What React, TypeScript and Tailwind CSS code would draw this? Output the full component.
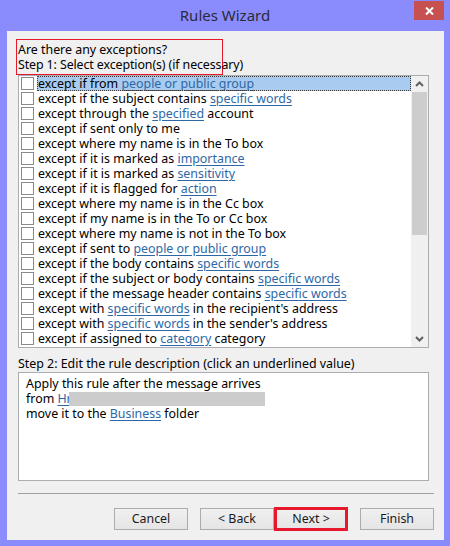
const rows: { parts: (string | { link: string })[] }[] = [
  { parts: ["except if from ", { link: "people or public group" }] },
  { parts: ["except if the subject contains ", { link: "specific words" }] },
  { parts: ["except through the ", { link: "specified" }, " account"] },
  { parts: ["except if sent only to me"] },
  { parts: ["except where my name is in the To box"] },
  { parts: ["except if it is marked as ", { link: "importance" }] },
  { parts: ["except if it is marked as ", { link: "sensitivity" }] },
  { parts: ["except if it is flagged for ", { link: "action" }] },
  { parts: ["except where my name is in the Cc box"] },
  { parts: ["except if my name is in the To or Cc box"] },
  { parts: ["except where my name is not in the To box"] },
  { parts: ["except if sent to ", { link: "people or public group" }] },
  { parts: ["except if the body contains ", { link: "specific words" }] },
  { parts: ["except if the subject or body contains ", { link: "specific words" }] },
  { parts: ["except if the message header contains ", { link: "specific words" }] },
  { parts: ["except with ", { link: "specific words" }, " in the recipient's address"] },
  { parts: ["except with ", { link: "specific words" }, " in the sender's address"] },
  { parts: ["except if assigned to ", { link: "category" }, " category"] },
];

const Link = ({ children }: { children: string }) => (
  <span className="text-[#2e67a5] underline underline-offset-[2px]">{children}</span>
);

const Chevron = ({ down }: { down?: boolean }) => (
  <svg width="9" height="6" viewBox="0 0 9 6" className={down ? "rotate-180" : ""}>
    <path d="M1 5 L4.5 1.5 L8 5" fill="none" stroke="#606060" strokeWidth="2" />
  </svg>
);

const Button = ({ label, primary }: { label: string; primary?: boolean }) => (
  <div
    className={
      "relative w-[74px] h-[22px] border border-[#acacac] bg-gradient-to-b from-[#f0f0f0] to-[#e5e5e5] flex items-center justify-center text-[#1a1a1a] " +
      (primary ? "border-t-[#3c7fb1]" : "")
    }
  >
    {label}
    {primary && (
      <div className="absolute -left-[1px] -top-[2px] -right-[1px] -bottom-[2px] border-[3px] border-[#e8182c]" />
    )}
  </div>
);

export default function App() {
  return (
    <div className="w-[450px] h-[546px] bg-[#8a8cfe] flex flex-col font-['Noto_Sans',sans-serif] text-[12.4px] text-black">
      <div className="relative h-[31px] flex items-center justify-center">
        <span className="text-[15px] text-[#2a2a3a]">Rules Wizard</span>
        <div className="absolute right-[6px] top-[1px] w-[30px] h-[19px] bg-[#c75050] flex items-center justify-center">
          <svg width="9" height="8" viewBox="0 0 9 8">
            <path d="M1 0.5 L8 7.5 M8 0.5 L1 7.5" stroke="white" strokeWidth="2" />
          </svg>
        </div>
      </div>

      <div className="ml-[7px] mr-[6px] mb-[6px] flex-1 bg-[#f0f0f0] flex flex-col pt-[8px]">
        <div className="ml-[9px] w-[207px] h-[36px] border border-[#e8182c] pl-[1px] pt-[2px] leading-[15px] whitespace-nowrap">
          <div>Are there any exceptions?</div>
          <div className="tracking-[-0.1px]">Step 1: Select exception(s) (if necessary)</div>
        </div>

        <div className="ml-[11px] w-[411px] h-[273px] border border-[#abadb3] bg-white flex">
          <div className="flex-1 flex flex-col">
            {rows.map((r, i) => (
              <div key={i} className="h-[15px] flex items-center leading-[15px]">
                <div className="ml-[2px] w-[13px] h-[13px] border border-[#8a8a8a] bg-white shrink-0" />
                <div
                  className={
                    "ml-[3px] pl-[1px] h-[15px] flex-1 whitespace-nowrap " +
                    (i === 0 ? "bg-[#a8cbef] outline outline-1 outline-dotted outline-[#3a3a3a] -outline-offset-1" : "")
                  }
                >
                  {r.parts.map((p, j) =>
                    typeof p === "string" ? <span key={j}>{p}</span> : <Link key={j}>{p.link}</Link>
                  )}
                </div>
              </div>
            ))}
          </div>
          <div className="w-[17px] bg-[#f0f0f0] flex flex-col items-center">
            <div className="h-[16px] flex items-center justify-center">
              <Chevron />
            </div>
            <div className="w-[15px] h-[143px] bg-[#cdcdcd]" />
            <div className="flex-1" />
            <div className="h-[16px] flex items-center justify-center">
              <Chevron down />
            </div>
          </div>
        </div>

        <div className="ml-[11px] mt-[8px] h-[16px] leading-[15px]">
          Step 2: Edit the rule description (click an underlined value)
        </div>
        <div className="ml-[11px] w-[411px] h-[109px] border border-[#abadb3] bg-white pl-[7px] pt-[3px] leading-[15px]">
          <div>Apply this rule after the message arrives</div>
          <div className="flex items-center">
            <span>from&nbsp;</span>
            <Link>Hr</Link>
            <div className="-ml-[3px] w-[196px] h-[14px] shrink-0 bg-[#cccccc]" />
          </div>
          <div>
            move it to the <Link>Business</Link> folder
          </div>
        </div>

        <div className="ml-[11px] mt-[12px] w-[416px] h-px bg-[#a0a0a0]" />

        <div className="mt-[14px] flex justify-end pr-[10px] gap-[12px]">
          <Button label="Cancel" />
          <div className="flex">
            <Button label="< Back" />
            <Button label="Next >" primary />
          </div>
          <Button label="Finish" />
        </div>
      </div>
    </div>
  );
}
